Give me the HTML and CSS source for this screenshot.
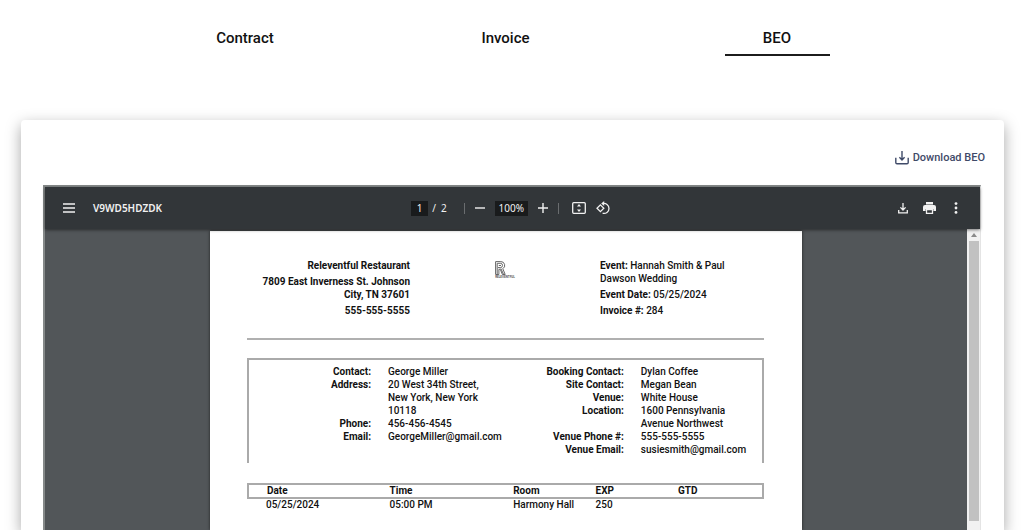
FILE: index.html
```html
<!DOCTYPE html>
<html lang="en">
<head>
<meta charset="utf-8">
<title>BEO</title>
<meta name="viewport" content="width=device-width, initial-scale=1">
<link rel="stylesheet" href="styles.css">
</head>
<body>
<nav class="tabs">
  <button class="tab" type="button">Contract</button>
  <button class="tab" type="button">Invoice</button>
  <button class="tab tab-active" type="button">BEO</button>
</nav>
<main class="card">
  <a class="download" href="#">
    <svg width="14" height="15" viewBox="0 0 14 15" fill="none" stroke="currentColor" stroke-width="1.400"><path d="M7 1v9M4.400 7.200 7 9.900l2.600-2.700M.8 7.800v4.800q0 1.200 1.200 1.200h10q1.200 0 1.200-1.200V7.800"/></svg>
    <span>Download BEO</span>
  </a>
  <section class="viewer">
    <header class="toolbar">
      <div class="tools tools-left">
        <button class="icon" type="button" aria-label="Menu"><svg width="12" height="10" viewBox="0 0 12 10" fill="none" stroke="currentColor" stroke-width="1.500"><path d="M0 1h12M0 5h12M0 9h12"/></svg></button>
        <span class="file-name">V9WD5HDZDK</span>
      </div>
      <div class="tools tools-center">
        <input class="field page-number" type="text" value="1" aria-label="Page">
        <span class="page-total">/&nbsp; 2</span>
        <span class="divider"></span>
        <button class="icon" type="button" aria-label="Zoom out"><svg width="10" height="10" viewBox="0 0 10 10" stroke="currentColor" stroke-width="1.400"><path d="M0 5h10"/></svg></button>
        <input class="field zoom-level" type="text" value="100%" aria-label="Zoom level">
        <button class="icon" type="button" aria-label="Zoom in"><svg width="10" height="10" viewBox="0 0 10 10" stroke="currentColor" stroke-width="1.400"><path d="M0 5h10M5 0v10"/></svg></button>
        <span class="divider"></span>
        <button class="icon icon-fit" type="button" aria-label="Fit to page"><svg width="14" height="12" viewBox="0 0 14 12" fill="none" stroke="currentColor" stroke-width="1.300"><rect x=".7" y=".7" width="12.600" height="10.600" rx="1"/><path d="M7 2 9 4.600H5zM7 10 9 7.400H5z" fill="currentColor" stroke="none"/></svg></button>
        <button class="icon" type="button" aria-label="Rotate"><svg width="14" height="14" viewBox="0 0 14 14" fill="none" stroke="currentColor" stroke-width="1.300"><path d="M4.400 3.900 7.800 7.300 4.400 10.700 1 7.300z"/><path d="M6.600 2.600a5 5 0 1 1 0 9.600"/><path d="M8.200 0v5L5.200 2.500z" fill="currentColor" stroke="none"/></svg></button>
      </div>
      <div class="tools tools-right">
        <button class="icon" type="button" aria-label="Download"><svg width="10" height="11" viewBox="0 0 10 11" fill="none" stroke="currentColor" stroke-width="1.300"><path d="M5 0v7M2.400 4.400 5 7l2.600-2.600M.7 7v2.900h8.600V7"/></svg></button>
        <button class="icon" type="button" aria-label="Print"><svg width="13" height="12" viewBox="0 0 13 12" fill="currentColor"><path d="M3 0h7v2.400H3zM2 3h9q2 0 2 2v4h-2.600V7H2.600v2H0V5q0-2 2-2z"/><path d="M3.500 7.600h6v3.700h-6z" fill="none" stroke="currentColor" stroke-width="1.300"/></svg></button>
        <button class="icon" type="button" aria-label="More"><svg width="4" height="12" viewBox="0 0 4 12" fill="currentColor"><circle cx="2" cy="1.600" r="1.400"/><circle cx="2" cy="6" r="1.400"/><circle cx="2" cy="10.400" r="1.400"/></svg></button>
      </div>
    </header>
    <div class="stage">
      <div class="canvas">
        <article class="sheet">
          <div class="heading">
            <div class="restaurant">
              <p>Releventful Restaurant</p>
              <p>7809 East Inverness St. Johnson City, TN 37601</p>
              <p>555-555-5555</p>
            </div>
            <div class="logo">
              <svg width="11" height="14" viewBox="0 0 11 14" fill="none" stroke="#666"><path d="M.6 13.500V.6h5.200a3.800 3.800 0 0 1 2 7.100l2.400 5.800H7.400L5.300 8.300H3.900v5.200zM2.200 13.500V2.300h3.600a2.200 2.200 0 0 1 0 4.300H3M5.900 7.600l2.700 5.900M3.800 4.500h2.200" stroke-width="1"/></svg>
              <span class="logo-name">RELEVENTFUL</span>
            </div>
            <div class="event">
              <p><b>Event:</b> Hannah Smith &amp; Paul Dawson Wedding</p>
              <p><b>Event Date:</b> 05/25/2024</p>
              <p><b>Invoice #:</b> 284</p>
            </div>
          </div>
          <hr class="rule">
          <div class="details">
            <dl class="contact">
              <dt>Contact:</dt><dd>George Miller</dd>
              <dt>Address:</dt><dd>20 West 34th Street,<br>New York, New York<br>10118</dd>
              <dt>Phone:</dt><dd>456-456-4545</dd>
              <dt>Email:</dt><dd>GeorgeMiller@gmail.com</dd>
            </dl>
            <dl class="contact">
              <dt>Booking Contact:</dt><dd>Dylan Coffee</dd>
              <dt>Site Contact:</dt><dd>Megan Bean</dd>
              <dt>Venue:</dt><dd>White House</dd>
              <dt>Location:</dt><dd>1600 Pennsylvania<br>Avenue Northwest</dd>
              <dt>Venue Phone #:</dt><dd>555-555-5555</dd>
              <dt>Venue Email:</dt><dd>susiesmith@gmail.com</dd>
            </dl>
          </div>
          <table class="schedule">
            <colgroup><col class="wide"><col class="wide"><col class="narrow"><col class="narrow"><col></colgroup>
            <thead><tr><th>Date</th><th>Time</th><th>Room</th><th>EXP</th><th>GTD</th></tr></thead>
            <tbody><tr><td>05/25/2024</td><td>05:00 PM</td><td>Harmony Hall</td><td>250</td><td></td></tr></tbody>
          </table>
        </article>
      </div>
      <div class="scrollbar">
        <svg class="arrow" width="6" height="4" viewBox="0 0 6 4" fill="#8a8a8a"><path d="M3 0l3 4H0z"/></svg>
        <div class="thumb"></div>
      </div>
    </div>
  </section>
</main>
</body>
</html>
```

FILE: styles.css
```css
* {
  box-sizing: border-box;
}

body {
  margin: 0;
  height: 100vh;
  overflow: hidden;
  display: flex;
  flex-direction: column;
  background: #fff;
  color: #111;
  font-family: Roboto, "Liberation Sans", sans-serif;
}

button {
  border: 0;
  padding: 0;
  background: none;
  color: inherit;
  font: inherit;
}

.tabs {
  display: grid;
  grid-template-columns: 260fr 261fr 282fr;
  justify-items: center;
  padding: 20px 106px 0 115px;
  margin-bottom: 64px;
}

.tab {
  width: 105px;
  height: 36px;
  padding-top: 2px;
  border-bottom: 2px solid transparent;
  font-size: 15px;
  font-weight: 500;
}

.tab-active {
  border-color: #1c1c1c;
}

.card {
  flex: 1;
  min-height: 0;
  display: flex;
  flex-direction: column;
  margin: 0 20px 0 21px;
  padding: 27px 23px 0 22px;
  border-radius: 4px 4px 0 0;
  box-shadow: 0 5px 15px rgba(0, 0, 0, 0.35);
}

.download {
  align-self: flex-end;
  display: flex;
  align-items: center;
  gap: 4px;
  height: 20px;
  margin: 0 -4px 18px 0;
  color: #3f4a68;
  font-size: 11px;
  font-weight: 500;
  text-decoration: none;
}

.viewer {
  flex: 1;
  min-height: 0;
  display: flex;
  flex-direction: column;
  border: solid #858989;
  border-width: 2px 1px 0 2px;
  border-right-color: #e4e4e4;
}

.toolbar {
  display: grid;
  grid-template-columns: 1fr auto 1fr;
  align-items: center;
  flex: none;
  height: 42px;
  padding: 0 22px 0 18px;
  background: #323639;
  color: #f1f1f1;
  font-family: "Noto Sans", "Open Sans", sans-serif;
  font-size: 10px;
  box-shadow: 0 1px 3px rgba(0, 0, 0, 0.5);
  z-index: 1;
}

.tools {
  display: flex;
  align-items: center;
}

.tools-left {
  gap: 18px;
}

.file-name {
  font-weight: 600;
}

.tools-center {
  gap: 10px;
}

.tools-right {
  justify-content: flex-end;
  gap: 18px;
}

.tools-right .icon:first-child {
  margin-right: -3px;
}

.icon {
  display: flex;
}

.icon-fit {
  margin-left: 3px;
}

.field {
  height: 15px;
  padding: 0;
  border: 0;
  background: #191b1c;
  color: inherit;
  font: inherit;
  text-align: center;
}

.page-number {
  width: 17px;
  margin-right: -6px;
}

.page-total {
  margin-right: 7px;
}

.zoom-level {
  width: 33px;
}

.divider {
  width: 1px;
  height: 11px;
  background: #6a6d6f;
}

.stage {
  flex: 1;
  min-height: 0;
  display: flex;
  background: #525659;
}

.canvas {
  flex: 1;
  min-width: 0;
  display: flex;
  justify-content: center;
  padding-top: 2px;
}

.sheet {
  flex: 0 1 592px;
  padding: 28px 38px 0 37px;
  background: #fff;
  box-shadow: 0 0 3px rgba(0, 0, 0, 0.6);
  font-size: 10px;
  font-weight: 500;
  line-height: 13px;
}

.heading {
  display: grid;
  grid-template-columns: 163fr 190fr 164fr;
  height: 79px;
}

.heading p {
  margin: 0 0 3px;
}

.restaurant {
  font-weight: 700;
  text-align: right;
}

.logo {
  display: flex;
  flex-direction: column;
  justify-self: center;
  padding-top: 2px;
}

.logo-name {
  color: #555;
  font-size: 3px;
  font-weight: 700;
  line-height: 4px;
}

.event {
  padding-right: 20px;
}

.rule {
  margin: 0 0 18px;
  border: 0;
  border-top: 2px solid #b0b0b0;
}

.details {
  display: grid;
  grid-template-columns: 250fr 262fr;
  height: 105px;
  padding-top: 5px;
  border: 2px solid #aaa;
  border-bottom: 0;
}

.contact {
  display: grid;
  grid-template-columns: 122px 1fr;
  column-gap: 17px;
  align-content: start;
  margin: 0;
}

.contact dt {
  font-weight: 700;
  text-align: right;
}

.contact dd {
  margin: 0;
}

.schedule {
  width: 100%;
  margin-top: 20px;
  table-layout: fixed;
  border-collapse: collapse;
}

.schedule thead {
  border: 2px solid #aaa;
}

.schedule th,
.schedule td {
  padding: 0 0 0 18px;
  font-weight: 500;
  line-height: 12px;
  text-align: left;
  white-space: nowrap;
}

.schedule th {
  font-weight: 700;
}

.wide {
  width: 24%;
}

.narrow {
  width: 16%;
}

.scrollbar {
  display: flex;
  flex-direction: column;
  align-items: center;
  width: 13px;
  padding: 4px 0 9px;
  background: #f1f1f1;
}

.arrow {
  flex: none;
  margin-bottom: 4px;
}

.thumb {
  flex: 1;
  width: 10px;
  background: #c1c1c1;
}
```
